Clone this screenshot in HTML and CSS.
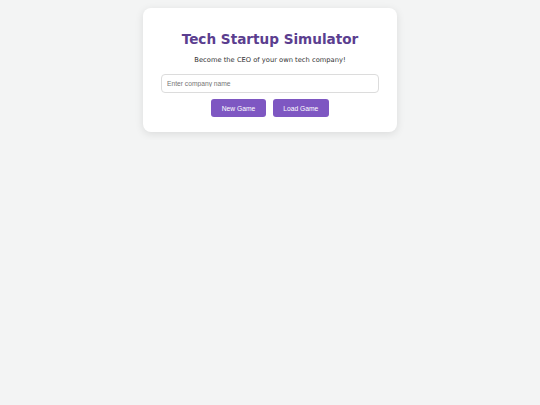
FILE: index.html
```html
<!DOCTYPE html>
<html lang="en">
<head>
    <meta charset="UTF-8">
    <meta name="viewport" content="width=device-width, initial-scale=1.0">
    <title>Tech Startup Simulator</title>
    <link rel="stylesheet" href="styles.css">
</head>
<body>
    <div class="start-screen">
        <h1>Tech Startup Simulator</h1>
        <p class="tagline">Become the CEO of your own tech company!</p>
        <input type="text" id="companyName" class="company-input" placeholder="Enter company name">
        <div class="start-buttons">
            <button class="btn" id="newGameBtn">New Game</button>
            <button class="btn" id="loadGameBtn">Load Game</button>
        </div>
    </div>
</body>
</html>
```

FILE: styles.css
```css
body {
    margin: 0;
    padding: 8px 0;
    background: #f3f4f4;
    font-family: "DejaVu Sans", Verdana, sans-serif;
    color: #333;
}

.start-screen {
    width: 254px;
    margin: 0 auto;
    padding: 23px 18px 14.5px 18px;
    box-sizing: border-box;
    background: white;
    border-radius: 8px;
    box-shadow: 0 2px 8px rgba(0, 0, 0, 0.1);
    text-align: center;
}

.start-screen h1 {
    margin: 0;
    font-size: 13.6px;
    font-weight: bold;
    color: #5b3e8f;
}

.tagline {
    margin: 8.7px 0 10.4px 0;
    font-size: 6.72px;
    color: #333;
}

.company-input {
    display: block;
    width: 100%;
    height: 18.5px;
    padding: 0 5px;
    box-sizing: border-box;
    border: 1px solid #dcdcdc;
    border-radius: 4px;
    font-family: "Liberation Sans", Arial, sans-serif;
    font-size: 6.7px;
    color: #333;
}

.company-input::placeholder {
    color: #757575;
}

.start-buttons {
    display: flex;
    justify-content: center;
    gap: 7.5px;
    margin-top: 6.6px;
}

.btn {
    height: 18px;
    padding: 0 10.3px;
    border: none;
    border-radius: 3px;
    background: #7e57c2;
    color: white;
    font-family: "Liberation Sans", Arial, sans-serif;
    font-size: 6.7px;
    cursor: pointer;
}
```
